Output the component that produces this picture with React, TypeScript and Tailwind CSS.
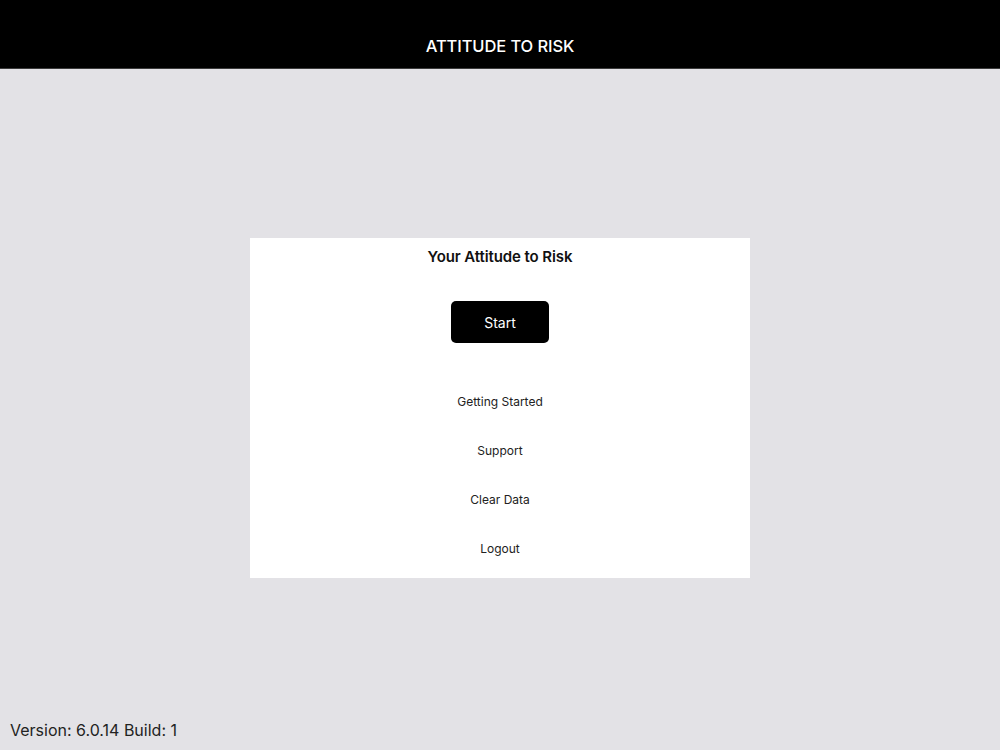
export default function App() {
  const links = ["Getting Started", "Support", "Clear Data", "Logout"];

  return (
    <div
      className="flex h-[750px] w-full flex-col bg-[#e3e2e6] text-black"
      style={{ fontFamily: "Inter, 'Noto Sans', sans-serif" }}
    >
      <header className="flex h-[69px] shrink-0 items-end justify-center border-b border-[#3c3c3c] bg-black pb-[12px]">
        <h1 className="text-[16.5px] font-medium leading-[20px] tracking-[-0.1px] text-white">
          ATTITUDE TO RISK
        </h1>
      </header>

      <main className="flex flex-1 justify-center pt-[169px]">
        <div className="flex h-[340px] w-[500px] flex-col items-center bg-white pt-[9px]">
          <h2 className="text-[15px] font-semibold leading-[20px] tracking-[-0.1px] text-[#111]">
            Your Attitude to Risk
          </h2>
          <button className="mt-[34px] h-[42px] w-[98px] rounded-[5px] bg-black text-[14px] text-white">
            Start
          </button>
          <ul className="mt-[34px] flex w-full flex-col">
            {links.map((link) => (
              <li
                key={link}
                className="flex h-[49px] items-center justify-center text-[12px] text-[#222]"
              >
                {link}
              </li>
            ))}
          </ul>
        </div>
      </main>

      <footer className="px-[10px] pb-[9px] text-[16px] leading-[22px] text-[#222]">
        Version: 6.0.14 Build: 1
      </footer>
    </div>
  );
}
